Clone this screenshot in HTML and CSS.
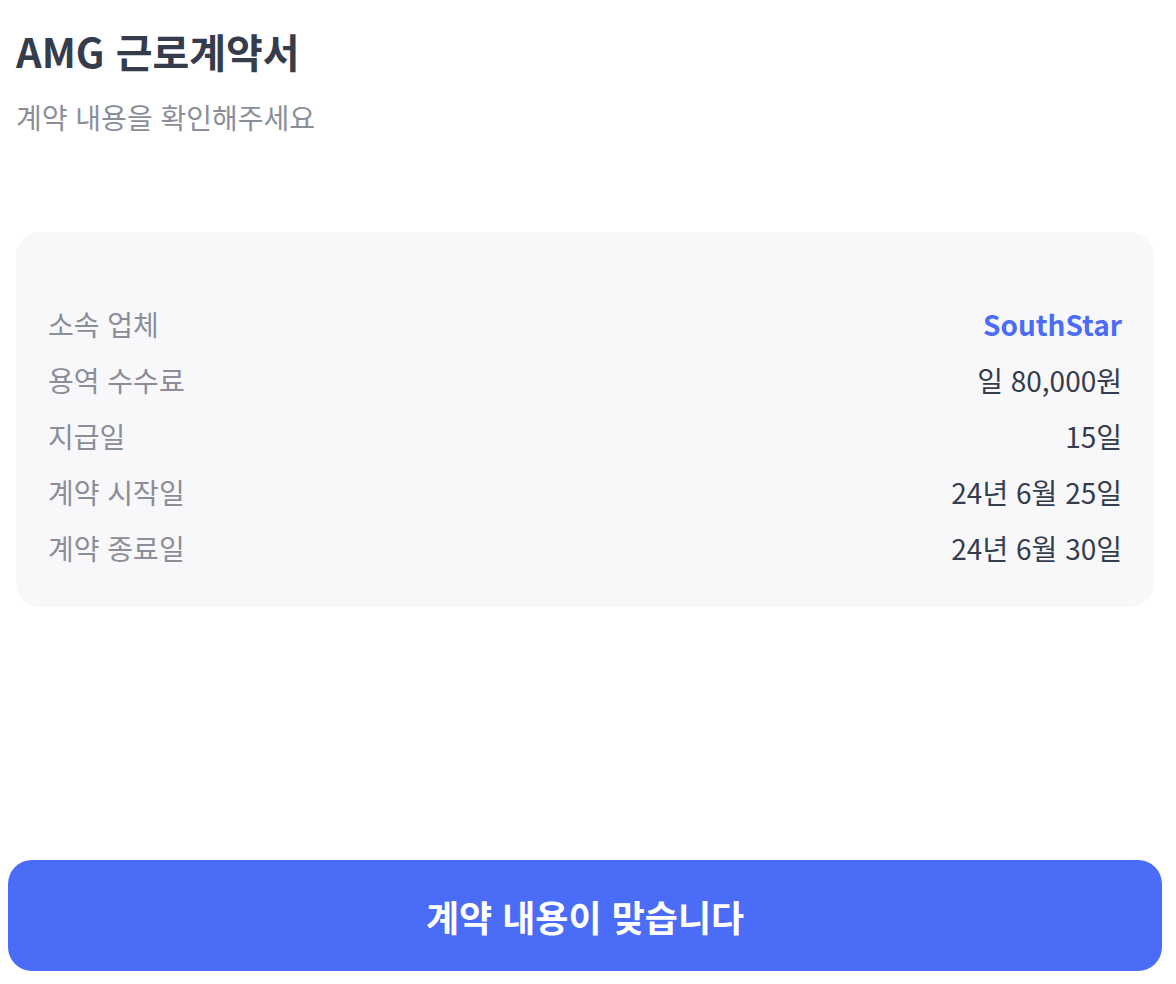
FILE: index.html
```html
<!DOCTYPE html>
<html lang="ko">
<head>
<meta charset="utf-8">
<title>AMG 근로계약서</title>
<link rel="stylesheet" href="styles.css">
</head>
<body>
<div class="page">
  <header class="header">
    <h1 class="title">AMG 근로계약서</h1>
    <p class="subtitle">계약 내용을 확인해주세요</p>
  </header>
  <section class="card">
    <div class="row"><span class="label">소속 업체</span><span class="value accent">SouthStar</span></div>
    <div class="row"><span class="label">용역 수수료</span><span class="value">일 80,000원</span></div>
    <div class="row"><span class="label">지급일</span><span class="value">15일</span></div>
    <div class="row"><span class="label">계약 시작일</span><span class="value">24년 6월 25일</span></div>
    <div class="row"><span class="label">계약 종료일</span><span class="value">24년 6월 30일</span></div>
  </section>
  <div class="spacer"></div>
  <button class="confirm" type="button">계약 내용이 맞습니다</button>
</div>
</body>
</html>
```
FILE: styles.css
```css
* { box-sizing: border-box; }
html, body { margin: 0; padding: 0; background: #ffffff; }
body {
  font-family: "Noto Sans CJK KR", "Noto Sans", sans-serif;
  color: #353c4c;
}
.page {
  display: flex;
  flex-direction: column;
  height: 984px;
}
.header {
  padding: 23px 16px 0 16px;
}
.title {
  margin: 0;
  font-size: 40px;
  line-height: 56px;
  font-weight: 700;
  color: #353c4c;
}
.subtitle {
  margin: 19px 0 0 0;
  font-size: 28px;
  line-height: 39px;
  font-weight: 400;
  color: #8b8e98;
}
.card {
  margin: 95px 22px 0 16px;
  padding: 64px 32px 31px 32px;
  background: #f8f8fa;
  border-radius: 24px;
  display: flex;
  flex-direction: column;
}
.row {
  display: flex;
  justify-content: space-between;
  align-items: center;
  height: 56px;
  font-size: 28px;
}
.label { color: #8b8e98; }
.value { color: #353c4c; }
.accent { color: #4b6cf7; font-weight: 700; }
.spacer { flex: 1; }
.confirm {
  margin: 0 14px 13px 8px;
  height: 111px;
  border: none;
  border-radius: 24px;
  background: #4b6cf7;
  color: #ffffff;
  font-family: "Noto Sans CJK KR", "Noto Sans", sans-serif;
  font-size: 36px;
  font-weight: 700;
  cursor: pointer;
}
```
